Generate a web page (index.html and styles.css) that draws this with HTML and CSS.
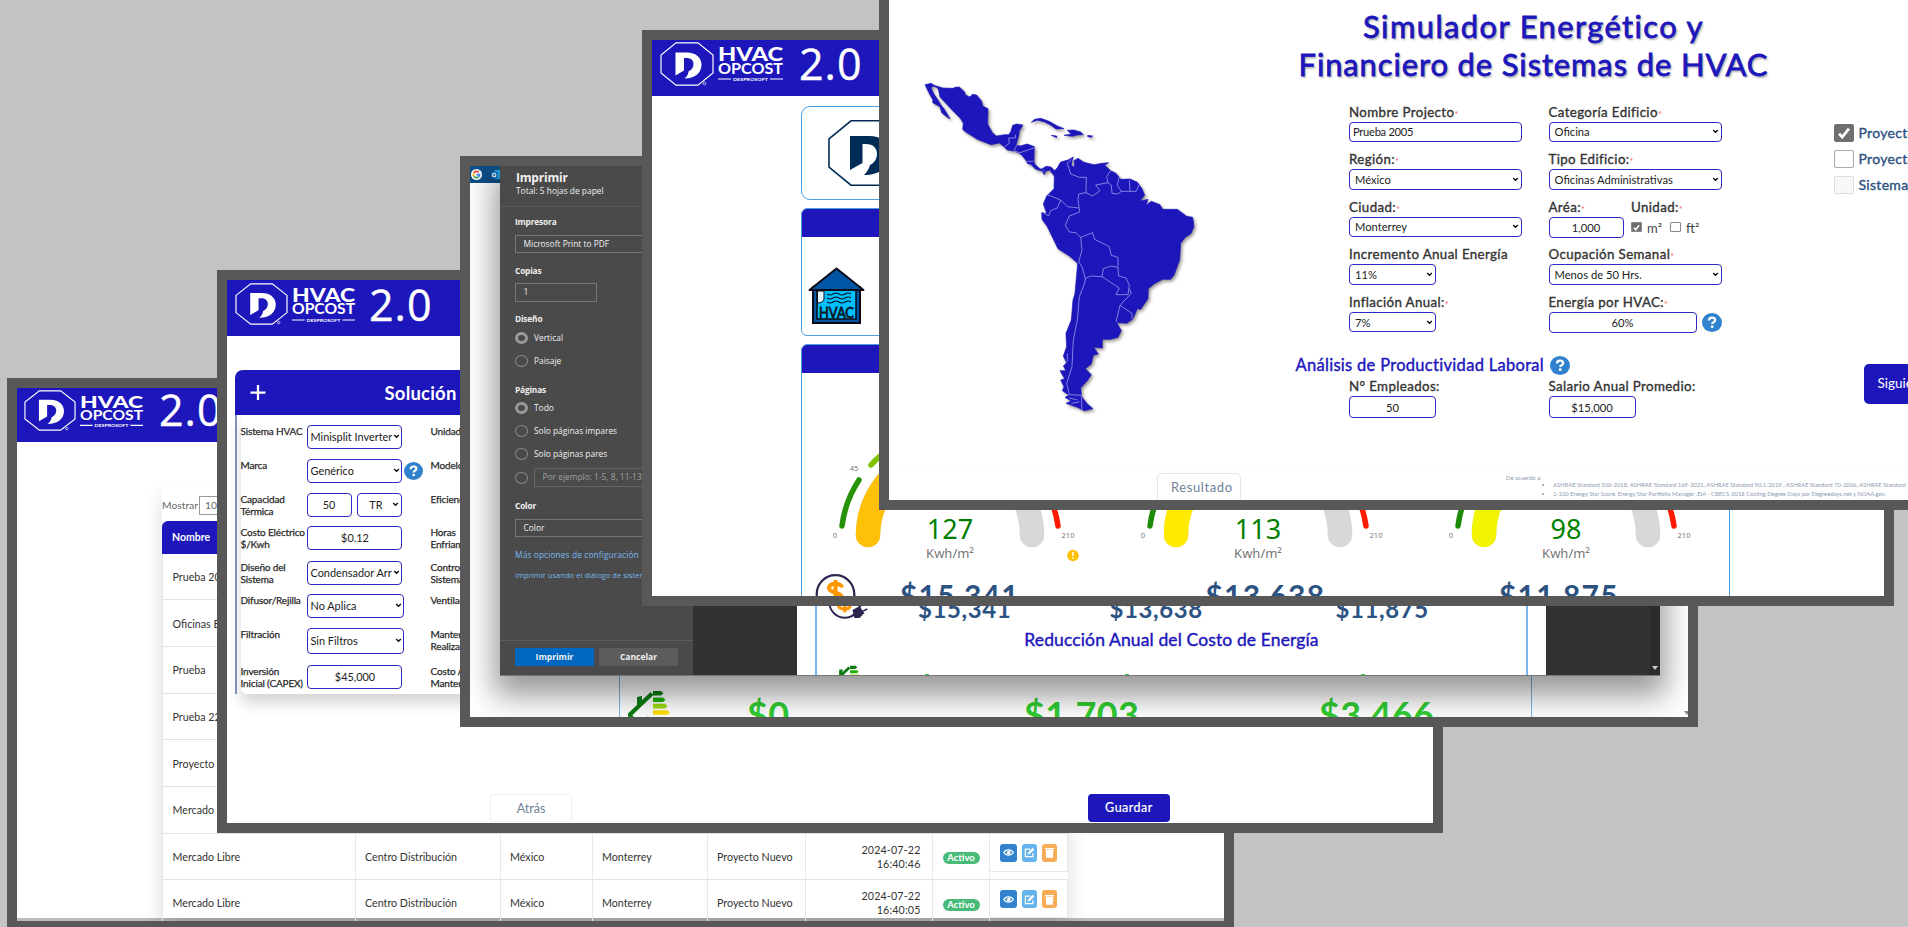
FILE: index.html
```html
<!DOCTYPE html>
<html lang="es">
<head>
<meta charset="utf-8">
<title>HVAC OPCOST 2.0</title>
<link rel="stylesheet" href="styles.css">
</head>
<body>
<svg class="defs" width="0" height="0" aria-hidden="true">
  <symbol id="mark" viewBox="0 0 54 44" preserveAspectRatio="none">
    <path d="M16 .9H38L53 13V31L38 43.1H16L1 31V13Z" fill="none" stroke="currentColor" stroke-width="1.200"/>
    <path fill-rule="evenodd" fill="currentColor" d="M15.500 10.500H27C36 10.500 41.500 15.500 41.500 22.500C41.500 31 35 36.500 24.500 36.500C27.500 34 28.500 31.500 28.500 29.500C32 27.500 33.500 25 33.500 22C33.500 18 30.500 16 26.500 16H24V28.500L15.500 33.500Z"/>
    <circle cx="44.500" cy="41.500" r="1.300" fill="none" stroke="currentColor" stroke-width=".7"/>
  </symbol>
  <symbol id="chev" viewBox="0 0 8 6"><path d="M1.200 1.300L4 4L6.800 1.300" fill="none" stroke="#111" stroke-width="1.700"/></symbol>
  <symbol id="help" viewBox="0 0 20 20" preserveAspectRatio="none"><circle cx="10" cy="10" r="10" fill="#3182ce"/><path d="M7 8C7 5.800 8.300 4.900 10 4.900C11.800 4.900 13.100 6 13.100 7.500C13.100 9.600 10.200 9.700 10.200 11.700" fill="none" stroke="#fff" stroke-width="2.300"/><circle cx="10.200" cy="14.400" r="1.400" fill="#fff"/></symbol>
  <symbol id="eye" viewBox="0 0 16 16"><path d="M1 8C4 3 12 3 15 8C12 13 4 13 1 8Z" fill="none" stroke="#fff" stroke-width="1.600"/><circle cx="8" cy="8" r="3" fill="#fff"/><circle cx="7" cy="7" r="1" fill="#3182ce"/></symbol>
  <symbol id="edit" viewBox="0 0 16 16"><path d="M9 3H2V14H13V9" fill="none" stroke="#fff" stroke-width="1.800"/><path d="M5 11L6 8L12.500 1L15 3.500L8.500 10.300Z" fill="#fff"/></symbol>
  <symbol id="trash" viewBox="0 0 16 16"><path d="M1.500 1.500H14.500V3.500H1.500ZM2.500 4.500H13.500L12.800 15.500H3.200Z" fill="#fff"/></symbol>
  <symbol id="money" viewBox="0 0 50 44">
    <circle cx="20.500" cy="20" r="18.800" fill="#fff" stroke="#2d2550" stroke-width="2.200"/>
    <path d="M30 36L40 28" stroke="#fff" stroke-width="7"/>
    <path d="M27 13.500C27 9 14 8 14 14C14 19.500 27 17.500 27 24C27 30 13 29 13 24M20.500 6V32" fill="none" stroke="#ff9800" stroke-width="4"/>
    <path d="M28 37C32 36 33 34 34 32" fill="none" stroke="#2d2550" stroke-width="2.500"/>
    <path d="M31 30L38 26L43 33L38 38H33ZM38 27L41 22M42 31L48 28" fill="#2d2550" stroke="#2d2550" stroke-width="2"/>
  </symbol>
  <symbol id="eco" viewBox="0 0 44 32">
    <path d="M24 3.500L1.500 25L7 32" fill="none" stroke="#0a7d12" stroke-width="4.200"/>
    <path d="M9 7L14 6V13L9 18Z" fill="#0a7d12"/>
    <path d="M25 1H33L35.500 3.300L33 5.600H25Z" fill="#0a7d12"/>
    <path d="M25 7.400H35L37.500 9.700L35 12H25Z" fill="#1db100"/>
    <path d="M25 13.800H37L39.500 16.100L37 18.400H25Z" fill="#9bdc0a"/>
    <path d="M25 20.200H39.500L42 22.500L39.500 24.800H25Z" fill="#ffe000"/>
    <path d="M14 30L20 26L22 32H14Z" fill="#8fdca8"/>
  </symbol>
</svg>

<section class="win win-list">
  <header class="brand"><svg class="mark"><use href="#mark"/></svg><svg class="word" viewBox="0 0 66 38" preserveAspectRatio="none"><text x="0" y="13.500" font-size="18" font-weight="900" textLength="65" lengthAdjust="spacingAndGlyphs">HVAC</text><text x="0" y="26.500" font-size="14.500" font-weight="700" textLength="65" lengthAdjust="spacingAndGlyphs">OPCOST</text><path d="M0 32H13M52 32H65" stroke="#fff" stroke-width="1.200"/><text x="15" y="33.800" font-size="4.500" font-weight="700" textLength="35" lengthAdjust="spacingAndGlyphs">DESPROSOFT</text></svg><span class="ver">2.0</span></header>
  <div class="table-wrap">
    <div class="show"><span>Mostrar</span><span class="show-n">10</span></div>
    <div class="table">
      <div class="thead">Nombre</div>
      <div class="tr"><span>Prueba 2005</span></div>
      <div class="tr"><span>Oficinas E</span></div>
      <div class="tr"><span>Prueba</span></div>
      <div class="tr"><span>Prueba 22</span></div>
      <div class="tr"><span>Proyecto</span></div>
      <div class="tr"><span>Mercado</span></div>
      <div class="tr full"><span>Mercado Libre</span><span>Centro Distribución</span><span>México</span><span>Monterrey</span><span>Proyecto Nuevo</span><span class="date">2024-07-22<br>16:40:46</span><span class="st"><b>Activo</b></span><span class="acts"><i class="a1"><svg><use href="#eye"/></svg></i><i class="a2"><svg><use href="#edit"/></svg></i><i class="a3"><svg><use href="#trash"/></svg></i></span></div>
      <div class="tr full"><span>Mercado Libre</span><span>Centro Distribución</span><span>México</span><span>Monterrey</span><span>Proyecto Nuevo</span><span class="date">2024-07-22<br>16:40:05</span><span class="st"><b>Activo</b></span><span class="acts"><i class="a1"><svg><use href="#eye"/></svg></i><i class="a2"><svg><use href="#edit"/></svg></i><i class="a3"><svg><use href="#trash"/></svg></i></span></div>
    </div>
  </div>
</section>

<section class="win win-sol">
  <header class="brand"><svg class="mark"><use href="#mark"/></svg><svg class="word" viewBox="0 0 66 38" preserveAspectRatio="none"><text x="0" y="13.500" font-size="18" font-weight="900" textLength="65" lengthAdjust="spacingAndGlyphs">HVAC</text><text x="0" y="26.500" font-size="14.500" font-weight="700" textLength="65" lengthAdjust="spacingAndGlyphs">OPCOST</text><path d="M0 32H13M52 32H65" stroke="#fff" stroke-width="1.200"/><text x="15" y="33.800" font-size="4.500" font-weight="700" textLength="35" lengthAdjust="spacingAndGlyphs">DESPROSOFT</text></svg><span class="ver">2.0</span></header>
  <div class="sol">
    <div class="sol-head"><svg class="plus" viewBox="0 0 16 16"><path d="M8 0V16M0 8H16" stroke="#fff" stroke-width="2.400"/></svg><span>Solución</span></div>
    <div class="sol-body">
      <div class="sol-grid">
        <label>Sistema HVAC</label><div><span class="box sel">Minisplit Inverter<svg><use href="#chev"/></svg></span></div><label>Unidad</label>
        <label>Marca</label><div><span class="box sel">Genérico<svg><use href="#chev"/></svg></span><svg class="help"><use href="#help"/></svg></div><label>Modelo</label>
        <label>Capacidad<br>Térmica</label><div><span class="box half">50</span><span class="box half sel tr-sel">TR<svg><use href="#chev"/></svg></span></div><label>Eficiencia</label>
        <label>Costo Eléctrico<br>$/Kwh</label><div><span class="box mid">$0.12</span></div><label>Horas<br>Enfriamiento</label>
        <label>Diseño del<br>Sistema</label><div><span class="box sel">Condensador Arr<svg><use href="#chev"/></svg></span></div><label>Control<br>Sistema</label>
        <label>Difusor/Rejilla</label><div><span class="box sel wide">No Aplica<svg><use href="#chev"/></svg></span></div><label>Ventilación</label>
        <label>Filtración</label><div><span class="box sel wide tall">Sin Filtros<svg><use href="#chev"/></svg></span></div><label>Mantenimiento<br>Realizado</label>
        <label>Inversión<br>Inicial (CAPEX)</label><div><span class="box mid">$45,000</span></div><label>Costo Anual<br>Mantenimiento</label>
      </div>
    </div>
  </div>
  <div class="sol-foot"><span class="btn ghost">Atrás</span><span class="btn solid">Guardar</span></div>
</section>

<section class="win win-print">
  <div class="favs">
    <svg viewBox="0 0 12 12" class="g"><circle cx="6" cy="6" r="6" fill="#fff"/><g fill="none" stroke-width="1.900"><path d="M3.200 4.300A3.200 3.200 0 0 1 8.300 3.600" stroke="#ea4335"/><path d="M3.200 4.300A3.300 3.300 0 0 0 3.200 7.700" stroke="#fbbc05"/><path d="M3.200 7.700A3.200 3.200 0 0 0 8.200 8.500" stroke="#34a853"/><path d="M8.200 8.500A3.200 3.200 0 0 0 9.200 6.100H6" stroke="#4285f4"/></g></svg>
    <svg viewBox="0 0 12 12" class="o"><path d="M4 1H12V11H4Z" fill="#28a8ea"/><path d="M0 3H7V10H0Z" fill="#0f6cbd"/><circle cx="3.500" cy="6.500" r="1.800" fill="none" stroke="#fff" stroke-width="1.200"/></svg>
  </div>
  <div class="under">
    <div class="savings"><svg class="eco"><use href="#eco"/></svg><b>$0</b><b>$1,703</b><b>$3,466</b></div>
  </div>
  <div class="under-end"><i></i></div>
  <div class="dialog">
    <form class="opts">
      <div class="opts-top"><h2>Imprimir</h2><p>Total: 5 hojas de papel</p></div>
      <div class="opts-mid">
        <h3>Impresora</h3><div class="dk long">Microsoft Print to PDF</div>
        <h3>Copias</h3><div class="dk short">1</div>
        <h3>Diseño</h3>
        <div class="rad on"><i></i>Vertical</div><div class="rad"><i></i>Paisaje</div>
        <h3 class="pg">Páginas</h3>
        <div class="rad on"><i></i>Todo</div><div class="rad"><i></i>Solo páginas impares</div><div class="rad"><i></i>Solo páginas pares</div>
        <div class="rad"><i></i><span class="dk ph">Por ejemplo: 1-5, 8, 11-13</span></div>
        <h3 class="co">Color</h3><div class="dk long">Color</div>
        <a class="l1">Más opciones de configuración</a><a class="l2">Imprimir usando el diálogo de sistema</a>
      </div>
      <div class="opts-foot"><span class="pb">Imprimir</span><span class="pc">Cancelar</span></div>
    </form>
    <div class="paper">
      <div class="paper-in">
        <div class="amts"><svg class="money"><use href="#money"/></svg><b>$15,341</b><b>$13,638</b><b>$11,875</b></div>
        <h4>Reducción Anual del Costo de Energía</h4>
        <div class="tips"><svg class="eco"><use href="#eco"/></svg><i></i><i></i><i></i></div>
      </div>
    </div>
    <div class="track"><i></i></div>
  </div>
</section>

<section class="win win-res">
  <header class="brand"><svg class="mark"><use href="#mark"/></svg><svg class="word" viewBox="0 0 66 38" preserveAspectRatio="none"><text x="0" y="13.500" font-size="18" font-weight="900" textLength="65" lengthAdjust="spacingAndGlyphs">HVAC</text><text x="0" y="26.500" font-size="14.500" font-weight="700" textLength="65" lengthAdjust="spacingAndGlyphs">OPCOST</text><path d="M0 32H13M52 32H65" stroke="#fff" stroke-width="1.200"/><text x="15" y="33.800" font-size="4.500" font-weight="700" textLength="35" lengthAdjust="spacingAndGlyphs">DESPROSOFT</text></svg><span class="ver">2.0</span></header>
  <div class="cards">
    <div class="card c1"><svg class="bigmark" viewBox="0 0 82 66"><path d="M23 .8H59L81 19V47L59 65.200H23L1 47V19Z" fill="none" stroke="#002b54" stroke-width="1.600"/><path fill-rule="evenodd" fill="#002b54" d="M22 16H41C54 16 62 23 62 34C62 47 52 55 36 55C40 51 41 48 42 45C46 43 49 39 49 34C49 28 45 24 38 24H34.500V43L22 50Z"/></svg></div>
    <div class="card c2"><div class="bar"></div>
      <svg class="house" viewBox="0 0 57 58"><path d="M5 20H52V56H5Z" fill="#0055a5" stroke="#0a0a14" stroke-width="2"/><path d="M9 23H48V52H9Z" fill="#00bfff" stroke="#0a0a14" stroke-width="1.500"/><path d="M28.500 1.500L55.500 23H1.500Z" fill="#0055a5" stroke="#0a0a14" stroke-width="2" stroke-linejoin="round"/><path d="M9.500 24H16V32Q15 36 9.500 36Z" fill="#dff3fb" stroke="#0a0a14"/><path d="M19 27q3 2 6 0t6 0t6 0t6 0M19 31q3 2 6 0t6 0t6 0t6 0M19 35q3 2 6 0t6 0t6 0t6 0" fill="none" stroke="#0a0a14" stroke-width="1.200"/><text x="11" y="50.500" font-size="16" textLength="35" lengthAdjust="spacingAndGlyphs" fill="#0a1a2a" stroke="#0a1a2a" stroke-width=".9">HVAC</text></svg>
    </div>
    <div class="card c3"><div class="bar"></div>
      <div class="gauges">
        <svg viewBox="-154 -164 308 194"><g fill="none" stroke-linecap="round"><path d="M-82 -2A82 82 0 0 1 82 -2" stroke="#d8d8d8" stroke-width="24.500"/><path d="M-82 -2A82 82 0 0 1 20 -81" stroke="#ffc107" stroke-width="24.500"/><g stroke-width="5.500"><path d="M-108 -11A108 108 0 0 1 -91 -57" stroke="#269208"/><path d="M-79 -72A108 108 0 0 1 -30 -103" stroke="#80c400"/><path d="M88 -60A108 108 0 0 1 108 -11" stroke="#ff1a00"/></g></g><g class="tick"><text x="-115" y="1">0</text><text x="-96" y="-66">45</text><text x="118" y="1">210</text></g><text class="val" x="0" y="2">127</text><text class="unit" x="0" y="21">Kwh/m²</text><g><circle cx="123" cy="18.500" r="5.800" fill="#ffc107"/><path d="M123 15V19M123 20.500V22" stroke="#fff" stroke-width="1.500"/></g></svg>
        <svg viewBox="-154 -164 308 194"><g fill="none" stroke-linecap="round"><path d="M-82 -2A82 82 0 0 1 82 -2" stroke="#d8d8d8" stroke-width="24.500"/><path d="M-82 -2A82 82 0 0 1 0 -84" stroke="#ffea00" stroke-width="24.500"/><g stroke-width="5.500"><path d="M-108 -11A108 108 0 0 1 -91 -57" stroke="#1b8a05"/><path d="M88 -60A108 108 0 0 1 108 -11" stroke="#ff1a00"/></g></g><g class="tick"><text x="-115" y="1">0</text><text x="118" y="1">210</text></g><text class="val" x="0" y="2">113</text><text class="unit" x="0" y="21">Kwh/m²</text></svg>
        <svg viewBox="-154 -164 308 194"><g fill="none" stroke-linecap="round"><path d="M-82 -2A82 82 0 0 1 82 -2" stroke="#d8d8d8" stroke-width="24.500"/><path d="M-82 -2A82 82 0 0 1 -10 -83" stroke="#f2f500" stroke-width="24.500"/><g stroke-width="5.500"><path d="M-108 -11A108 108 0 0 1 -91 -57" stroke="#1b8a05"/><path d="M88 -60A108 108 0 0 1 108 -11" stroke="#ff1a00"/></g></g><g class="tick"><text x="-115" y="1">0</text><text x="118" y="1">210</text></g><text class="val" x="0" y="2">98</text><text class="unit" x="0" y="21">Kwh/m²</text></svg>
      </div>
      <div class="totals"><svg class="money"><use href="#money"/></svg><b>$15,341</b><b>$13,638</b><b>$11,875</b></div>
    </div>
  </div>
</section>

<section class="win win-form">
  <div class="fmain">
    <svg class="map" viewBox="25 0 1175 1408">
      <g class="land">
        <path d="M133 254L152 250L160 256L187 264L218 265L222 262L236 261L252 276L254 285L268 291L275 283L288 285L303 304L306 318L322 326L321 372L335 398L347 408L372 404L384 404L390 396L396 376L408 372L427 375L416 393L414 408L406 436L418 438L440 432L461 440L460 482L462 492L472 502L481 508L497 499L511 501L523 514L519 526L507 510L495 514L491 524L486 514L464 507L452 494L440 490L438 484L424 466L415 459L400 453L380 450L370 440L356 429L331 434L290 418L252 394L246 388L248 370L240 356L208 323L178 291L173 268L168 262L155 258L152 266L160 283L172 300L180 314L190 326L208 356L200 352L183 338L178 320L156 308L157 300L147 283Z"/>
        <path d="M452 367L462 358L480 355L505 364L530 378L550 386L526 387L510 375L490 365L470 361ZM560 391L580 390L600 396L608 404L590 405L574 409L550 406L572 402ZM512 406L528 408V413ZM621 406L636 408L632 412L621 410Z"/>
        <path d="M519 515L530 503L540 486L562 480L578 471L574 484L572 498L582 500L580 482L592 475L610 487L640 494L664 490L684 488L672 496L690 512L706 520L720 538L748 537L770 547L784 566L792 586L778 603L802 598L796 616L812 604L838 614L846 628L890 628L918 649L936 652L940 680L930 702L914 712L900 730L897 780L880 826L870 838L846 838L820 852L803 866L802 896L780 928L770 926L756 958L738 970L708 968L722 992L712 1012L690 1018L665 1018L665 1044L639 1042L653 1062L638 1066L632 1092L614 1106L632 1124L620 1142L600 1164L603 1190L620 1212L637 1226L610 1232L590 1222L556 1210L572 1203L553 1192L566 1186L545 1172L550 1160L540 1140L552 1136L538 1112L556 1112L548 1098L558 1088L548 1068L558 1040L556 1000L572 960L577 900L583 880L591 790L566 768L532 746L500 680L484 658L483 638L498 640L488 612L498 588L520 566L521 530Z"/>
      </g>
      <path class="border" d="M572 478L560 490L570 522L596 532H617L616 578L594 582L592 598L597 636M616 578L636 588L658 572L645 555L682 548L678 530L690 512M682 548L692 556L694 580L712 582L722 574L710 556L716 530M722 574L748 574L746 540M748 574H766L776 554M500 584L540 600L530 624L510 632L504 648L484 636M540 600L560 620L594 624M597 636L566 648L554 676L566 696L586 698L600 712L636 698L642 718L686 740L692 766L712 772V800M600 712L604 750L594 786L604 800L614 836L630 828L664 830L668 806L690 798L712 802L714 828L736 834L746 856L742 884L706 884L716 864L664 830M746 866L752 880L718 916L706 966M718 916L754 940V958M614 836L612 850L596 890L590 960L578 1020L574 1100L558 1150L566 1184L604 1186M602 1190L604 1230M372 440L386 430L384 414H404V404M400 453L408 436M400 453L418 458L460 444M440 484H459M566 1194L590 1200M572 1210L596 1206M560 1060V1085M486 508L492 514"/>
    </svg>
    <div class="fcol">
      <h1>Simulador Energético y<br><span>Financiero de Sistemas de HVAC</span></h1>
      <div class="fgrid">
        <div class="f"><label>Nombre Projecto<sup>*</sup></label><span class="box txt">Prueba 2005</span></div>
        <div class="f"><label>Categoría Edificio<sup>*</sup></label><span class="box sel">Oficina<svg><use href="#chev"/></svg></span></div>
        <div class="f"><label>Región:<sup>*</sup></label><span class="box sel">México<svg><use href="#chev"/></svg></span></div>
        <div class="f"><label>Tipo Edificio:<sup>*</sup></label><span class="box sel">Oficinas Administrativas<svg><use href="#chev"/></svg></span></div>
        <div class="f"><label>Ciudad:<sup>*</sup></label><span class="box sel">Monterrey<svg><use href="#chev"/></svg></span></div>
        <div class="f two"><div><label>Aréa:<sup>*</sup></label><span class="box mid area">1,000</span></div><div><label>Unidad:<sup>*</sup></label><span class="units"><i class="ck on"><svg viewBox="0 0 12 12"><path d="M2.500 6.500L5 9L9.500 3" fill="none" stroke="#fff" stroke-width="2"/></svg></i>m²<i class="ck"></i>ft²</span></div></div>
        <div class="f"><label>Incremento Anual Energía</label><span class="box sel sm">11%<svg><use href="#chev"/></svg></span></div>
        <div class="f"><label>Ocupación Semanal<sup>*</sup></label><span class="box sel">Menos de 50 Hrs.<svg><use href="#chev"/></svg></span></div>
        <div class="f"><label>Inflación Anual:<sup>*</sup></label><span class="box sel sm">7%<svg><use href="#chev"/></svg></span></div>
        <div class="f"><label>Energía por HVAC:<sup>*</sup></label><span class="row"><span class="box mid en">60%</span><svg class="help"><use href="#help"/></svg></span></div>
      </div>
      <div class="lab"><span>Análisis de Productividad Laboral</span><svg class="help"><use href="#help"/></svg></div>
      <div class="fgrid last">
        <div class="f"><label>N° Empleados:</label><span class="box mid sm">50</span></div>
        <div class="f"><label>Salario Anual Promedio:</label><span class="box mid sm">$15,000</span></div>
      </div>
    </div>
    <div class="side">
      <div class="opt"><i class="on"><svg viewBox="0 0 20 18"><path d="M4.500 9.500L8 13.500L15.500 4" fill="none" stroke="#fff" stroke-width="3"/></svg></i>Proyecto</div>
      <div class="opt"><i></i>Proyecto</div>
      <div class="opt"><i class="off"></i>Sistemas</div>
      <span class="next">Siguiente</span>
    </div>
  </div>
  <footer class="ffoot">
    <span class="result">Resultado</span>
    <div class="notes"><p>De acuerdo a:</p><ul><li class="n1">ASHRAE Standard 100-2018, ASHRAE Standard 169-2021, ASHRAE Standard 90.1-2019 , ASHRAE Standard 70-2006, ASHRAE Standard 105</li><li class="n2">1-100 Energy Star Score, Energy Star Portfolio Manager ,EIA - CBECS-2018 Cooling Degree Days por Degreedays.net y NOAA.gov.</li></ul></div>
  </footer>
</section>
</body>
</html>
```
FILE: styles.css
```css
* { box-sizing: border-box; }
body { margin: 0; width: 1908px; height: 927px; position: relative; overflow: hidden; background: #c3c3c3; font-family: Lato, "Open Sans", sans-serif; color: #333; }
h1, h2, h3, h4, p, ul { margin: 0; padding: 0; }
i { font-style: normal; }
svg { display: block; flex: none; }
.defs { position: absolute; }

/* Overlapping windows */
.win { position: absolute; overflow: hidden; background: #fff; border: 10px solid #585858; }
.win-list { left: 7px; top: 378px; width: 1227px; height: 549px; border-bottom-width: 6px; box-shadow: inset 0 -3px #bbb; }
.win-sol { left: 217px; top: 270px; width: 1226px; height: 563px; }
.win-print { left: 460px; top: 156px; width: 1238px; height: 571px; }
.win-res { left: 642px; top: 30px; width: 1252px; height: 576px; }
.win-form { left: 879px; top: 0; width: 1029px; height: 510px; border-top: 0; border-right: 0; }

/* Brand header */
.brand { display: flex; height: 56px; background: #1c16bb; color: #fff; padding: 2px 0 0 8px; }
.mark { width: 54px; height: 44px; }
.word { width: 66px; height: 38px; margin: 5px 0 0 4px; fill: #fff; overflow: visible; }
.ver { font: 43px/46px "Open Sans", sans-serif; margin: -1px 0 0 15px; letter-spacing: 1px; -webkit-text-stroke: .4px #fff; }
.win-sol .brand { padding-top: 3px; }
.win-sol .mark { height: 42px; width: 53px; }
.win-sol .word { width: 64px; }
.win-sol .ver { margin-left: 13px; }
.win-list .brand { height: 54px; }
.win-list .mark { height: 41px; width: 52px; margin-left: -1px; }
.win-list .word { width: 64px; height: 36px; }
.win-list .ver { margin-top: -3px; }

/* Project list */
.table-wrap { width: 906px; height: 433px; margin: 43px 0 0 145px; padding-top: 9px; box-shadow: 0 12px 18px rgba(0,0,0,.14); }
.show { display: flex; align-items: center; height: 22px; font-size: 10.300px; color: #666; margin-bottom: 4.500px; }
.show > span:first-child { width: 37px; }
.show-n { border: 1px solid #999; height: 19px; padding: 2px 5px; width: 50px; }
.table { display: flex; flex-direction: column; border-left: 1px solid #e4e7ec; }
.thead { height: 33px; background: #1c16bb; color: #fff; font: bold 10.500px/33px Lato, sans-serif; padding-left: 10px; border-radius: 6px 0 0; margin-left: -1px; }
.tr { height: 46.700px; flex: none; display: grid; grid-template-columns: 192.500px 145px 92px 115px 98.500px 126.500px 57.500px 78px; border-bottom: 1px solid #dfe3e6; align-items: center; font-size: 10.700px; color: #333; }
.tr > span { padding-left: 9.500px; }
.tr.full > span { height: 46px; line-height: 46px; border-right: 1px solid #e6e9ee; }
.tr.full > .date { line-height: 14px; padding: 9px 11px 0 0; text-align: right; letter-spacing: .15px; }
.tr.full > .st { display: flex; align-items: center; padding: 3px 0 0 10px; line-height: 12px; }
.st b { background: #48bb78; color: #fff; width: 37px; height: 12px; border-radius: 6px; text-align: center; font-size: 9.500px; line-height: 11.500px; }
.tr.full > .acts { display: flex; gap: 5px; height: 38px; align-self: start; padding: 10px 0 0 10px; border: 1px solid #e6e9ee; border-width: 0 1px 1px 0; line-height: 1; }
.acts i { width: 15px; height: 18px; border-radius: 3px; display: grid; place-items: center; }
.acts svg { width: 11px; height: 11px; }
.acts .a1 { background: #3182ce; width: 17px; } .acts .a2 { background: #63b3ed; } .acts .a3 { background: #f6ad55; }

/* Boxes shared by both forms */
.box { display: flex; align-items: center; justify-content: space-between; border: 1.500px solid #2f2ac1; border-radius: 4px; background: #fff; overflow: hidden; white-space: nowrap; color: #222; }
.box svg { width: 7px; height: 5px; }
.box.mid, .box.half { justify-content: center; }

/* Solution form */
.sol { width: 1190px; margin: 34px 0 0 7.500px; }
.sol-head { height: 45px; background: #1c16bb; border-radius: 8px 8px 0 0; display: flex; align-items: center; padding-left: 15px; color: #fff; font-size: 18.500px; font-weight: bold; letter-spacing: .2px; }
.sol-head .plus { width: 16px; height: 15px; margin-right: 119px; }
.sol-body { border-left: 2px solid #8a90c0; padding-left: 4px; height: 279px; }
.sol-grid { display: grid; grid-template-columns: 66px 124px 1fr; grid-template-rows: 33.500px 34px 33.500px 34.500px 33.500px 34px 36.500px 28px; padding: 10px 0 0; border-radius: 6px; height: 279px; box-shadow: 0 9px 14px rgba(0,0,0,.17); }
.sol-grid label { font-size: 10px; line-height: 12.300px; color: #2a2a2a; -webkit-text-stroke: .25px #2a2a2a; letter-spacing: -.15px; white-space: nowrap; }
.sol-grid > div { display: flex; }
.sol-grid .box { width: 95px; height: 24px; font-size: 10.900px; padding: 0 1px 1px 3px; border-color: #2f2ac1; }
.sol-grid .box.half { width: 45px; margin-right: 5px; padding: 0; }
.sol-grid .box.tr-sel { justify-content: flex-end; gap: 9px; padding-right: 2px; margin: 0; }
.sol-grid .box.wide { width: 97px; }
.sol-grid .box.tall { height: 25.500px; }
.sol-grid .help { width: 19px; height: 18px; margin: 3px 0 0 2px; }
.sol-foot { display: flex; justify-content: space-between; width: 680px; margin: 100px 0 0 263px; }
.btn { width: 82px; height: 28px; border-radius: 4px; text-align: center; font-size: 12.500px; line-height: 27px; }
.btn.ghost { border: 1px solid #edf0f4; color: #718096; }
.btn.solid { background: #1c16bb; color: #fff; -webkit-text-stroke: .2px #fff; letter-spacing: .5px; }

/* Print window */
.favs { height: 16.500px; background: #0d4f87; display: flex; gap: 10px; padding: 2px; align-items: center; }
.favs svg { width: 11px; height: 11px; margin-left: -1px; }
.under { width: 913px; height: 535px; margin-left: 148.500px; border: solid #7ab6ea; border-width: 0 1.500px; padding-top: 507px; }
.savings { display: grid; grid-template-columns: 119.500px 277px 295px 150px; padding-left: 8px; font-size: 36px; line-height: 49px; color: #32cd32; letter-spacing: .4px; }
.savings .eco { width: 44px; height: 32px; }
.under-end { position: absolute; right: 0; bottom: 2px; }
.under-end i { display: block; border: 3px solid transparent; border-top: 4px solid #888; border-bottom: 0; margin-right: -2px; }
.dialog { position: absolute; left: 30px; top: 0; width: 1160px; height: 510px; display: flex; background: #323232; box-shadow: 0 14px 28px 6px rgba(0,0,0,.4); border-bottom: 1px solid #777; }
.opts { width: 193px; background: #4a4a4a; color: #f0f0f0; font: 10px/12px "Open Sans", sans-serif; display: flex; flex-direction: column; }
.opts-top { height: 41px; border-bottom: 1px solid #585858; padding: 4px 0 0 16px; }
.opts-top h2 { font-size: 12px; line-height: 16px; font-weight: 700; letter-spacing: -.2px; }
.opts-top p { font-size: 8.400px; line-height: 9.500px; }
.opts-mid { height: 433.500px; padding: 9px 0 0 15px; font-size: 8.400px; overflow: hidden; border-bottom: 1px solid #5c5c5c; }
.opts-mid h3 { font-size: 8.300px; line-height: 12px; height: 18.500px; letter-spacing: -.15px; }
.dk { border: 1px solid #777; height: 18.500px; line-height: 16px; padding-left: 7.500px; margin-bottom: 11.500px; white-space: nowrap; }
.dk.long { width: 190px; } .dk.short { width: 82px; }
.rad { display: flex; align-items: center; height: 23.100px; gap: 6px; white-space: nowrap; }
.opts-mid h3 + .rad { margin-top: -5.500px; }
.rad i { width: 13px; height: 12px; border: 1px solid #8a8a8a; border-radius: 50%; flex: none; }
.rad.on i { border: 3px solid #9a9a9a; }
.opts-mid h3.pg { margin-top: 11.500px; }
.opts-mid h3.co { margin-top: 11px; }
.dk.ph { margin: 0; color: #a0a0a0; width: 170px; border-color: #666; }
.opts-mid a { display: block; color: #79b8ec; white-space: nowrap; letter-spacing: .1px; }
.opts-mid .l1 { margin-top: 11.500px; } .opts-mid .l2 { margin-top: 8.500px; font-size: 7.400px; }
.opts-foot { display: flex; gap: 5px; padding: 7px 0 0 15px; text-align: center; line-height: 18px; font-size: 8.500px; font-weight: bold; }
.opts-foot span { width: 79px; height: 18.500px; }
.pb { background: #0067c0; } .pc { background: #5c5c5c; }
.paper { width: 749px; margin-left: 104px; background: #fff; padding-left: 18px; }
.paper-in { width: 713px; height: 509px; overflow: hidden; border: solid #7ab6ea; border-width: 0 2px; padding-top: 415px; }
.amts { display: grid; grid-template-columns: 90px 191.500px 226px 100px; height: 44px; padding-left: 11px; font-size: 24px; line-height: 55px; color: #2c5282; letter-spacing: .6px; }
.amts .money { width: 41px; height: 38px; margin-top: 4px; }
.paper h4 { font-size: 17.500px; line-height: 22px; font-weight: 400; color: #1c16bb; -webkit-text-stroke: .4px #1c16bb; text-align: center; margin-top: 4px; letter-spacing: .12px; }
.tips { display: flex; padding: 14px 0 0 16px; }
.tips .eco { width: 30px; height: 22px; }
.tips i { width: 4px; height: 2px; background: #32cd32; margin: 9px 0 0 62px; }
.tips i + i { margin-left: 196px; } .tips i + i + i { margin-left: 232px; }
.track { width: 10px; margin-left: auto; background: #2b2b2b; display: flex; align-items: flex-end; padding: 0 2px 5px; }
.track i { border: 3px solid transparent; border-top: 4px solid #ccc; border-bottom: 0; }

/* Results window */
.cards { width: 928.500px; margin: 10px 0 0 149px; display: flex; flex-direction: column; gap: 8px; }
.card { border: 1px solid #4a9fe3; border-left-width: 1.500px; border-radius: 6px; overflow: hidden; }
.c1 { height: 93.500px; padding: 13px 0 0 26px; border-radius: 9px; }
.bigmark { width: 82px; height: 66px; }
.c2 { height: 128.500px; }
.bar { height: 28px; background: #1c16bb; }
.house { width: 57px; height: 58px; margin: 30px 0 0 6px; }
.c3 { height: 420px; }
.gauges { display: grid; grid-template-columns: repeat(3, 308px); margin: -.500px 0 0 -6.500px; height: 194px; font-family: "Noto Sans", sans-serif; text-anchor: middle; }
.tick { font-size: 7.500px; fill: #777; }
.val { font-size: 27px; fill: #008000; }
.unit { font-size: 13px; fill: #777; }
.totals { display: grid; grid-template-columns: 85px 305.500px 293.500px 150px; padding: 7px 0 0 13px; font-size: 30px; line-height: 42px; color: #2c5282; letter-spacing: 1.200px; }
.totals .money { width: 50px; height: 44px; }

/* Simulator window */
.fmain { height: 469.500px; display: grid; grid-template-columns: 391.500px 553px 1fr; overflow: hidden; }
.map { width: 391.670px; height: 469.330px; }
.land { fill: #1c16bb; stroke: #1c16bb; stroke-width: 2; stroke-linejoin: round; filter: drop-shadow(5px 6px 4px rgba(60,50,40,.5)); }
.border { fill: none; stroke: #a9a6ee; stroke-width: 2.200; stroke-linejoin: round; }
h1 { width: 506px; text-align: center; font-size: 31px; line-height: 38px; font-weight: 400; color: #1c16bb; -webkit-text-stroke: .8px #1c16bb; text-shadow: 1.500px 2px 2px rgba(0,0,0,.3); padding-top: 6.500px; height: 83.500px; white-space: nowrap; letter-spacing: 1.350px; }
h1 span { letter-spacing: .85px; }
.fgrid { display: grid; grid-template-columns: 199.500px 173px; grid-auto-rows: 47.600px; margin: 20px 0 0 68.500px; }
.f label { display: block; height: 18px; line-height: 17px; font-size: 13.300px; color: #333; -webkit-text-stroke: .35px #333; white-space: nowrap; letter-spacing: .38px; }
.f sup { color: #f56565; font-size: 9px; -webkit-text-stroke: 0; line-height: 0; vertical-align: -1px; }
.f .box { width: 173px; height: 20.500px; font-size: 11.200px; padding: 0 2px 0 5px; }
.f .box.txt { padding-left: 3px; letter-spacing: -.3px; }
.f .box.sm { width: 87px; } .f .box.mid { justify-content: center; height: 21.500px; padding: 0; }
.f .box.area { width: 75px; } .f .box.en { width: 148px; }
.row { display: flex; gap: 5px; }
.row .help, .lab .help { width: 20px; height: 19px; margin-top: 1px; }
.two { display: grid; grid-template-columns: 82.500px 1fr; }
.units { display: flex; align-items: center; height: 22px; font-size: 13px; gap: 5px; color: #444; }
.ck { width: 11px; height: 10px; border: 1px solid #888; border-radius: 1px; margin-top: -2px; }
.ck.on { background: #707070; }
.ck:nth-of-type(2) { margin-left: 3px; }
.lab { display: flex; gap: 5px; align-items: center; height: 23px; margin: 12px 0 0 15px; }
.lab span { font-size: 16.500px; width: 249px; white-space: nowrap; color: #1c16bb; -webkit-text-stroke: .4px #1c16bb; letter-spacing: .3px; }
.fgrid.last { margin-top: 2px; }
.side { padding-top: 123.500px; display: flex; flex-direction: column; }
.opt { display: flex; gap: 5px; height: 26px; font-size: 14px; line-height: 17px; color: #2a4f80; -webkit-text-stroke: .35px #2a4f80; white-space: nowrap; letter-spacing: .3px; }
.opt i { width: 20px; height: 18.500px; border: 1px solid #aaa; border-radius: 2px; flex: none; }
.opt i.on { background: #6f6f6f; border-color: #6f6f6f; } .opt i.off { background: #f8f8f8; border-color: #ddd; }
.next { margin: 162px 0 0 30px; height: 40px; width: 90px; background: #1c16bb; color: #fff; border-radius: 5px; padding-left: 14px; font-size: 13.500px; line-height: 39px; }
.ffoot { height: 30.500px; border-top: 1px solid #fafafa; display: flex; }
.result { margin: 2px 0 0 268px; width: 84px; height: 40px; border: 1px solid #e2e6f0; border-radius: 5px; color: #718096; font-size: 13px; line-height: 27px; padding-left: 13px; flex: none; letter-spacing: .6px; }
.notes { margin-left: 265px; padding-top: 2px; font-size: 5.830px; line-height: 9px; color: #8c9ab0; white-space: nowrap; }
.notes p { height: 7px; line-height: 9px; }
.notes ul { padding-left: 47px; }
.notes ul ::marker { font-size: 6px; }
```
